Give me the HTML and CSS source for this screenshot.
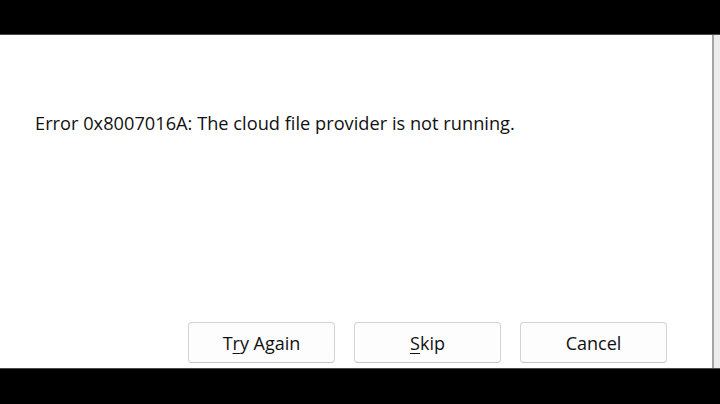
FILE: index.html
```html
<!DOCTYPE html>
<html lang="en">
<head>
  <meta charset="UTF-8" />
  <meta name="viewport" content="width=device-width, initial-scale=1.0" />
  <title>Error</title>
  <link rel="stylesheet" href="styles.css">
</head>
<body>
<div class="frame">
  <div class="dialog">
    <p class="message">Error 0x8007016A: The cloud file provider is not running.</p>
    <div class="actions">
      <button>T<u>r</u>y Again</button>
      <button><u>S</u>kip</button>
      <button>Cancel</button>
    </div>
  </div>
  <div class="edge"></div>
  <div class="side"></div>
</div>
</body>
</html>
```

FILE: styles.css
```css
html, body {
  margin: 0;
  padding: 0;
  background: #000;
  height: 404px;
  overflow: hidden;
}
body {
  font-family: 'Open Sans', 'Noto Sans', sans-serif;
  color: #111;
}
.frame {
  margin-top: 34px;
  height: 333px;
  border-top: 1px solid #4a4a4a;
  border-bottom: 1px solid #4a4a4a;
  display: flex;
}
.dialog {
  flex: 1;
  background: #fff;
  display: flex;
  flex-direction: column;
  padding: 0 45px 5px 35px;
}
.message {
  margin: 75px 0 0;
  font-size: 18.2px;
  line-height: 26px;
  letter-spacing: 0.02px;
}
.actions {
  margin-top: auto;
  display: flex;
  justify-content: flex-end;
  gap: 19px;
}
button {
  width: 147px;
  height: 41px;
  background: #fdfdfd;
  border: 1px solid #d3d3d3;
  border-bottom-color: #c4c4c4;
  border-radius: 4px;
  font-family: inherit;
  font-size: 18px;
  color: #111;
  padding: 0;
}
button u {
  text-underline-offset: 3px;
}
.edge {
  width: 2px;
  background: #a4a4a4;
}
.side {
  width: 6px;
  background: #ececec;
}
```
